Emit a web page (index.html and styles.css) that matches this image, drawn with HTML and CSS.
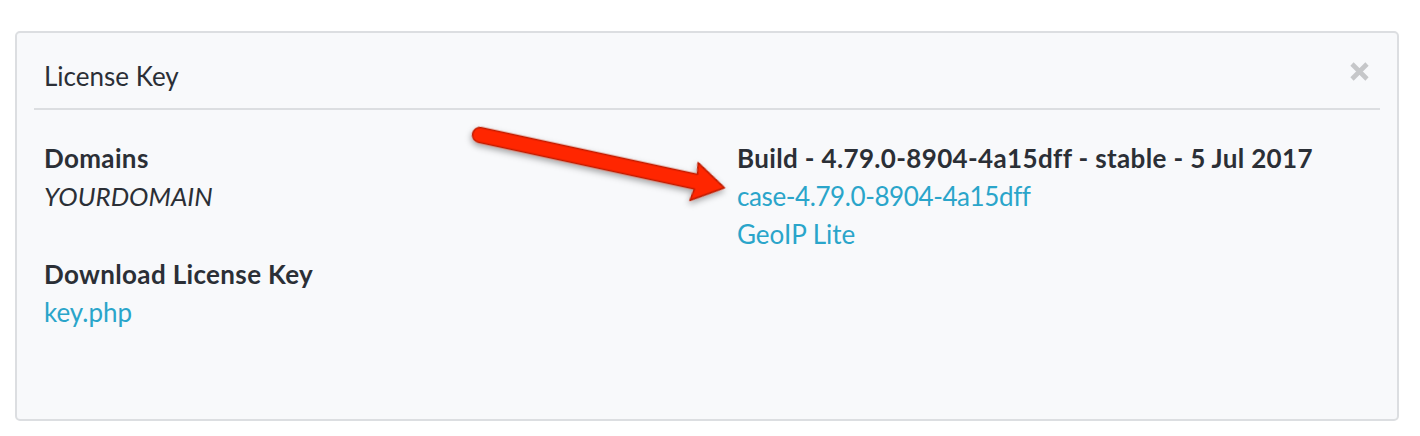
FILE: index.html
```html
<!DOCTYPE html>
<html>
<head>
<meta charset="utf-8">
<link rel="stylesheet" href="styles.css">
</head>
<body>
<div class="panel">
  <div class="panel-header">
    <span class="title">License Key</span>
    <svg class="close" width="19" height="19" viewBox="0 0 19 19">
      <path d="M2 2 L17 17 M17 2 L2 17" stroke="#c6c7c9" stroke-width="4.6" stroke-linecap="butt"/>
    </svg>
  </div>
  <div class="panel-body">
    <div class="col">
      <div class="group">
        <div class="label">Domains</div>
        <div class="value"><em>YOURDOMAIN</em></div>
      </div>
      <div class="group">
        <div class="label">Download License Key</div>
        <div class="value"><a href="#">key.php</a></div>
      </div>
    </div>
    <div class="col">
      <div class="label">Build - 4.79.0-8904-4a15dff - stable - 5 Jul 2017</div>
      <div class="value"><a href="#" class="tight">case-4.79.0-8904-4a15dff</a></div>
      <div class="value"><a href="#">GeoIP Lite</a></div>
    </div>
  </div>
  <svg class="arrow" width="300" height="110" viewBox="0 0 300 110">
    <defs>
      <filter id="sh" x="-20%" y="-50%" width="140%" height="200%">
        <feDropShadow dx="0" dy="3" stdDeviation="3" flood-color="#000" flood-opacity="0.35"/>
      </filter>
    </defs>
    <g transform="translate(15 20) rotate(12.2)" filter="url(#sh)">
      <path d="M0 -7.5 L221 -7.5 L219 -19 L250 0 L219 19.5 L221 7.5 L0 7.5 A7.5 7.5 0 0 1 0 -7.5 Z" fill="#ff2600" stroke="#c01c00" stroke-width="1.5" stroke-linejoin="round"/>
    </g>
  </svg>
</div>
</body>
</html>
```
FILE: styles.css
```css
html, body {
  margin: 0;
  padding: 0;
  background: #ffffff;
}
body {
  font-family: "Lato", "Liberation Sans", sans-serif;
  color: #2b2f36;
  font-size: 26px;
}
.panel {
  position: relative;
  margin: 31px 0 0 15px;
  width: 1384px;
  height: 390px;
  box-sizing: border-box;
  border: 2px solid #dcdee1;
  border-radius: 5px;
  background: #f8f9fb;
}
.panel-header {
  margin: 0 17px;
  padding: 0 11px 0 10px;
  height: 75px;
  border-bottom: 2px solid #dcdee1;
  display: flex;
  align-items: center;
  justify-content: space-between;
}
.title {
  font-size: 26px;
  color: #2b2f36;
  margin-top: 10px;
}
.close {
  display: block;
  margin-top: 1px;
}
.panel-body {
  display: grid;
  grid-template-columns: 693px 1fr;
  padding: 29px 0 0 27px;
  line-height: 38px;
}
.group {
  margin-bottom: 40px;
}
.label {
  font-weight: bold;
  letter-spacing: 0.35px;
}
.value em {
  font-style: italic;
}
a {
  color: #2aa5ca;
  text-decoration: none;
}
.tight {
  letter-spacing: -0.4px;
}
.arrow {
  position: absolute;
  left: 448px;
  top: 82px;
  overflow: visible;
}
```
